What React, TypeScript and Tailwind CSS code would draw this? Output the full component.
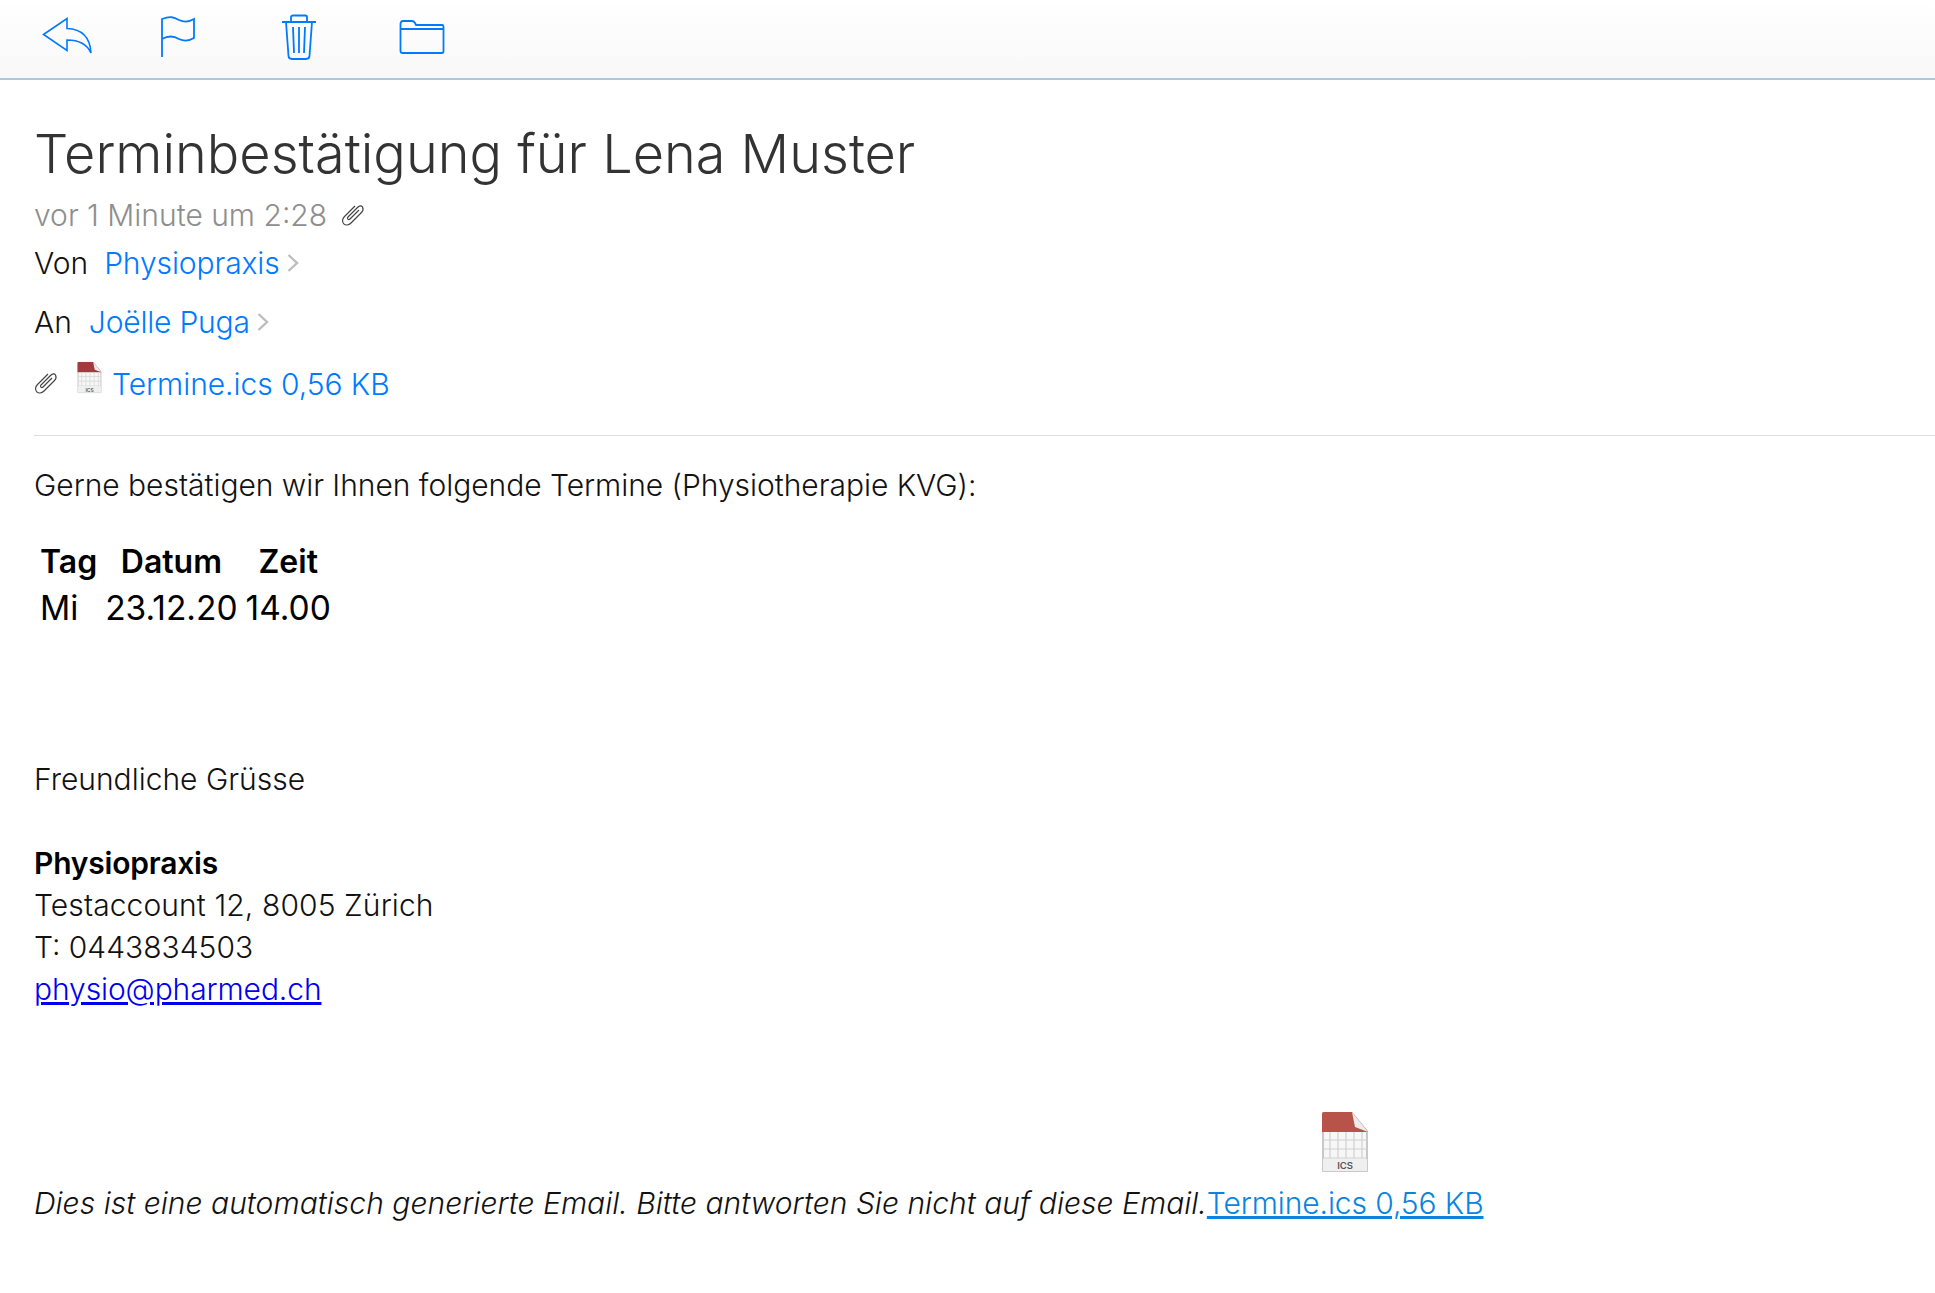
const FONT = { fontFamily: 'Inter, "Noto Sans", sans-serif' }

function ReplyIcon() {
  return (
    <svg width="52" height="40" viewBox="0 0 52 40" fill="none" stroke="#007aff" strokeWidth="1.6">
      <path d="M1.500 17.500 L25 1.500 V11.500 C39 12 48 19 49 36 C45 27 37 23 25 23 V33.500 Z" />
    </svg>
  )
}

function FlagIcon() {
  return (
    <svg width="36" height="42" viewBox="0 0 36 42" fill="none" stroke="#007aff" strokeWidth="1.8">
      <path d="M2 41 V3 C10 0 14 1 19 4 C25 7 29 6 34 3 V22 C29 25 25 26 19 23 C14 20 9 19 2 23" />
    </svg>
  )
}

function TrashIcon() {
  return (
    <svg width="36" height="46" viewBox="0 0 36 46" fill="none" stroke="#007aff" strokeWidth="1.8">
      <path d="M1 8 H35" strokeWidth="2" />
      <path d="M10 7 V3 Q10 1.500 12 1.500 H24 Q26 1.500 26 3 V7" />
      <path d="M5 8 L7.500 42 Q7.700 45 11 45 H25 Q28.300 45 28.500 42 L31 8" />
      <path d="M12 13 L13 39 M18 13 V39 M24 13 L23 39" />
    </svg>
  )
}

function FolderIcon() {
  return (
    <svg width="46" height="36" viewBox="0 0 46 36" fill="none" stroke="#007aff" strokeWidth="1.8">
      <path d="M1.500 5 Q1.500 2 4 2 H13 Q15 2 16 4 L17 6 H43 Q44.500 6 44.500 7.500 V32 Q44.500 34 43 34 H3.500 Q1.500 34 1.500 32 Z" />
      <path d="M1.500 10 H44.500" />
    </svg>
  )
}

function Clip() {
  return (
    <svg width="24" height="25" viewBox="0 0 24 25" fill="none" stroke="#444444" strokeWidth="1.2">
      <path d="M18 8 L9 17 C7.500 18.500 5.500 16.500 7 15 L16.500 5.500 C18.500 3.500 20.500 3.500 21.500 5 C22.500 7 22 9 20.500 10.500 L10 21 C7.500 23.500 4.500 23.500 2.800 21.800 C1 20 1 17 3.500 14.500 L14 4" />
    </svg>
  )
}

function Chevron() {
  return (
    <svg width="12" height="20" viewBox="0 0 12 20" fill="none" stroke="#bdbdbd" strokeWidth="2.4">
      <path d="M1.500 2 L10 10 L1.500 18" />
    </svg>
  )
}

function IcsIcon({ large }: { large?: boolean }) {
  const red = large ? '#b8534a' : '#a33a3d'
  return (
    <svg width={large ? 48 : 25} height={large ? 62 : 33} viewBox="0 0 48 62">
      <path d="M2 2 H31 L46 20 V60 H2 Z" fill="#f7f7f7" stroke="#b8b8b8" strokeWidth="1.500" />
      <path d="M1 3 Q1 1 3 1 H31 L47 21 H1 Z" fill={red} />
      <path d="M31 1 L34 16 L47 21 Z" fill="#ececec" />
      <path d="M9 21 V47 M17 21 V47 M25 21 V47 M33 21 V47 M41 21 V47 M2 29 H46 M2 38 H46 M2 47 H46" stroke="#d0d0d0" strokeWidth="1.200" />
      <rect x="2" y="48" width="44" height="12" fill="#efefef" />
      <text x="24" y="58" fontSize="9.500" textAnchor="middle" fill="#555" fontWeight="600" style={FONT}>ICS</text>
    </svg>
  )
}

export default function App() {
  return (
    <div className="min-h-[1293px] bg-white text-[#111]" style={FONT}>
      <div className="h-[80px] flex items-center pl-[42px] pb-[5px] border-b-2 border-[#a9c8e2] bg-gradient-to-b from-white to-[#f8f8f8]">
        <ReplyIcon />
        <div className="flex items-center ml-[66px] gap-[85px]">
          <FlagIcon />
          <TrashIcon />
          <div className="ml-[-3px]"><FolderIcon /></div>
        </div>
      </div>

      <div className="pl-[34px]">
        <h1 className="mt-[42px] text-[54px] leading-[64px] font-light text-[#333]">Terminbestätigung für Lena Muster</h1>
        <div className="mt-[9px] flex items-center gap-[14px] text-[30px] leading-[40px] text-[#8e8e8e] font-light">
          vor 1 Minute um 2:28 <span className="mt-[-2px]"><Clip /></span>
        </div>
        <div className="mt-[8px] flex items-center text-[30px] leading-[40px] font-light">
          <span>Von</span>
          <span className="ml-[16px] text-[#007aff] tracking-[-0.1px]">Physiopraxis</span>
          <span className="ml-[7px]"><Chevron /></span>
        </div>
        <div className="mt-[19px] flex items-center text-[30px] leading-[40px] font-light">
          <span>An</span>
          <span className="ml-[17px] text-[#007aff] tracking-[-0.2px]">Joëlle Puga</span>
          <span className="ml-[7px]"><Chevron /></span>
        </div>
        <div className="mt-[22px] flex items-center text-[30px] leading-[40px] font-light text-[#007aff]">
          <span className="mt-[-4px]"><Clip /></span>
          <span className="ml-[19px] mt-[-13px]"><IcsIcon /></span>
          <span className="ml-[10px] tracking-[-0.05px]">Termine.ics 0,56 KB</span>
        </div>
        <div className="mt-[31px] h-px bg-[#dedede]" />

        <p className="mt-[29px] text-[30px] leading-[40px] font-light tracking-[-0.03px]">Gerne bestätigen wir Ihnen folgende Termine (Physiotherapie KVG):</p>

        <table className="mt-[33px] ml-[1px] text-[33.500px] leading-[44px] text-black border-separate border-spacing-[2px]">
          <thead>
            <tr>
              <th className="px-[3px] py-0 text-center text-[32px] font-semibold">Tag</th>
              <th className="px-[3px] py-0 text-center text-[32px] font-semibold">Datum</th>
              <th className="px-[3px] py-0 text-center text-[32px] font-semibold">Zeit</th>
            </tr>
          </thead>
          <tbody>
            <tr>
              <td className="px-[3px] py-0">Mi</td>
              <td className="px-[3px] py-0">23.12.20</td>
              <td className="px-[3px] py-0">14.00</td>
            </tr>
          </tbody>
        </table>

        <p className="mt-[126px] text-[30px] leading-[42px] font-light">Freundliche Grüsse</p>
        <p className="mt-[42px] text-[30px] leading-[42px] font-semibold text-black tracking-[-0.2px]">Physiopraxis</p>
        <p className="text-[30px] leading-[42px] font-light tracking-[0.1px]">Testaccount 12, 8005 Zürich</p>
        <p className="text-[30px] leading-[42px] font-light">T: 0443834503</p>
        <a className="text-[30px] leading-[42px] font-light text-[#0000ee] underline tracking-[-0.1px]">physio@pharmed.ch</a>

        <div className="mt-[101px] flex items-end text-[30px] leading-[42px] font-light">
          <em className="tracking-[0.03px]">Dies ist eine automatisch generierte Email. Bitte antworten Sie nicht auf diese Email.</em>
          <a className="flex flex-col items-center text-[#0a84e0] underline tracking-[-0.1px]">
            <IcsIcon large />
            <span className="mt-[9px]">Termine.ics 0,56 KB</span>
          </a>
        </div>
      </div>
    </div>
  )
}
